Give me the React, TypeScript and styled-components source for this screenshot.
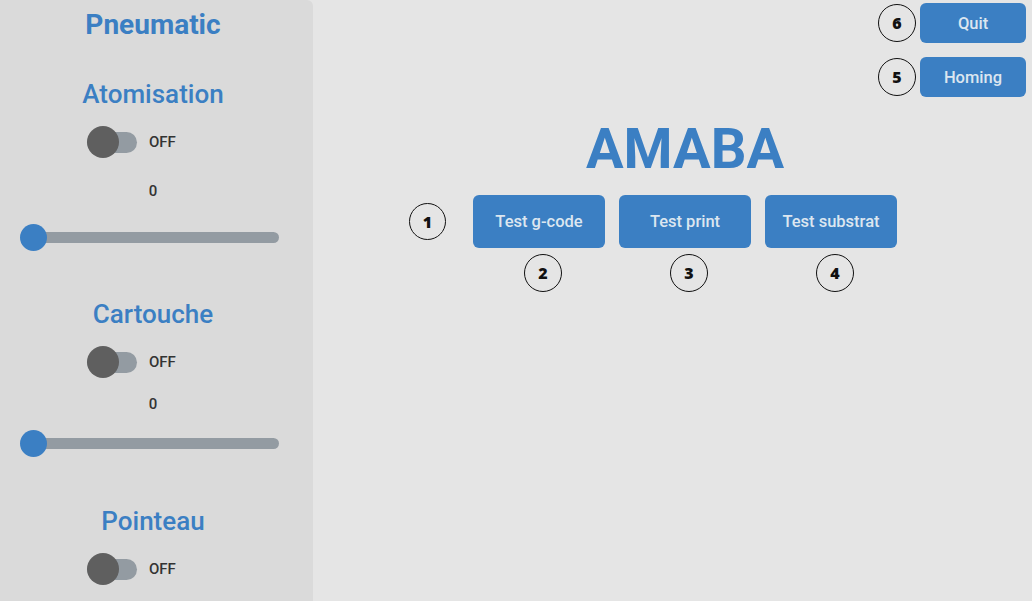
import React from 'react'
import styled, { createGlobalStyle } from 'styled-components'

const BLUE = '#3b7fc3'

const GlobalStyle = createGlobalStyle`
  html, body {
    margin: 0;
    padding: 0;
    background: #e5e5e5;
    font-family: Roboto, "Liberation Sans", Arial, sans-serif;
  }
  #root {
    width: 1032px;
    height: 601px;
    overflow: hidden;
  }
`

const Page = styled.div`
  display: flex;
  width: 100%;
  height: 100%;
`

const Sidebar = styled.aside`
  box-sizing: border-box;
  width: 313px;
  height: 100%;
  flex-shrink: 0;
  overflow: hidden;
  background: #dadada;
  border-top-right-radius: 6px;
  padding: 8px 27px 0 20px;
  display: flex;
  flex-direction: column;
  align-items: center;
`

const PanelTitle = styled.h1`
  margin: 0;
  font-size: 28px;
  line-height: 34px;
  font-weight: 700;
  color: ${BLUE};
`

const SectionTitle = styled.h2<{ $mt: number }>`
  margin: ${({ $mt }) => $mt}px 0 0;
  font-size: 26px;
  line-height: 32px;
  font-weight: 500;
  color: ${BLUE};
`

const SwitchRow = styled.label`
  align-self: flex-start;
  margin: 16px 0 0 67px;
  height: 32px;
  display: flex;
  align-items: center;
  gap: 12px;
  cursor: pointer;
`

const SwitchTrack = styled.span`
  position: relative;
  width: 50px;
  height: 21px;
  border-radius: 11px;
  background: #939ba2;
  display: flex;
  align-items: center;
`

const SwitchKnob = styled.span`
  position: absolute;
  left: 0;
  top: -6px;
  width: 32px;
  height: 32px;
  border-radius: 50%;
  background: #5f5f5f;
`

const SwitchText = styled.span`
  font-size: 15px;
  font-weight: 500;
  color: #333;
`

const Value = styled.div<{ $mt: number }>`
  margin-top: ${({ $mt }) => $mt}px;
  font-size: 15px;
  line-height: 20px;
  font-weight: 500;
  color: #333;
`

const Slider = styled.div<{ $mt: number }>`
  position: relative;
  align-self: flex-start;
  margin-top: ${({ $mt }) => $mt}px;
  width: 259px;
  height: 28px;
  display: flex;
  align-items: center;
`

const SliderTrack = styled.div`
  margin-left: 13px;
  flex: 1;
  height: 11px;
  border-radius: 6px;
  background: #939ba2;
`

const SliderThumb = styled.div`
  position: absolute;
  left: 0;
  top: 1px;
  width: 27px;
  height: 27px;
  border-radius: 50%;
  background: ${BLUE};
`

const Main = styled.main`
  flex: 1;
  display: flex;
  flex-direction: column;
  padding: 3px 6px 0 0;
`

const TopActions = styled.div`
  display: flex;
  flex-direction: column;
  align-items: flex-end;
  gap: 14px;
`

const ActionRow = styled.div`
  display: flex;
  align-items: center;
  gap: 4px;
`

const Button = styled.button<{ $w: number; $h: number }>`
  width: ${({ $w }) => $w}px;
  height: ${({ $h }) => $h}px;
  border: none;
  border-radius: 6px;
  background: ${BLUE};
  color: #dce6f0;
  font-family: Roboto, "Liberation Sans", Arial, sans-serif;
  font-size: 16.5px;
  font-weight: 500;
  cursor: pointer;
`

const Center = styled.div`
  display: flex;
  flex-direction: column;
  align-items: center;
  margin-left: 31px;
`

const Brand = styled.div`
  margin-top: 24px;
  font-size: 56px;
  line-height: 56px;
  font-weight: 700;
  color: ${BLUE};
`

const TestRow = styled.div`
  position: relative;
  margin-top: 18px;
  display: flex;
  gap: 14px;
`

const TestItem = styled.div`
  display: flex;
  flex-direction: column;
  align-items: center;
`

const Marker = styled.span<{ $size?: number }>`
  box-sizing: border-box;
  width: ${({ $size }) => $size ?? 38}px;
  height: ${({ $size }) => $size ?? 38}px;
  border: 1.5px solid #111;
  border-radius: 50%;
  display: inline-flex;
  align-items: center;
  justify-content: center;
  font-family: "Open Sans", "DejaVu Sans", sans-serif;
  font-size: 16px;
  font-weight: 800;
  color: #111;
`

const MarkerBelow = styled(Marker)`
  margin: 6px 0 0 8px;
`

const MarkerLeft = styled(Marker)`
  position: absolute;
  right: calc(100% + 27px);
  top: 8px;
`

const Toggle = () => (
  <SwitchRow>
    <SwitchTrack>
      <SwitchKnob />
    </SwitchTrack>
    <SwitchText>OFF</SwitchText>
  </SwitchRow>
)

const RangeSlider = ({ mt }: { mt: number }) => (
  <Slider $mt={mt}>
    <SliderTrack />
    <SliderThumb />
  </Slider>
)

const tests = [
  { label: 'Test g-code', n: 2 },
  { label: 'Test print', n: 3 },
  { label: 'Test substrat', n: 4 }
]

export default function App() {
  return (
    <>
      <GlobalStyle />
      <Page>
        <Sidebar>
          <PanelTitle>Pneumatic</PanelTitle>

          <SectionTitle $mt={36}>Atomisation</SectionTitle>
          <Toggle />
          <Value $mt={23}>0</Value>
          <RangeSlider mt={22} />

          <SectionTitle $mt={47}>Cartouche</SectionTitle>
          <Toggle />
          <Value $mt={16}>0</Value>
          <RangeSlider mt={15} />

          <SectionTitle $mt={48}>Pointeau</SectionTitle>
          <Toggle />
        </Sidebar>

        <Main>
          <TopActions>
            <ActionRow>
              <Marker>6</Marker>
              <Button $w={106} $h={40}>Quit</Button>
            </ActionRow>
            <ActionRow>
              <Marker>5</Marker>
              <Button $w={106} $h={40}>Homing</Button>
            </ActionRow>
          </TopActions>

          <Center>
            <Brand>AMABA</Brand>
            <TestRow>
              <MarkerLeft $size={37}>1</MarkerLeft>
              {tests.map(t => (
                <TestItem key={t.n}>
                  <Button $w={132} $h={53}>{t.label}</Button>
                  <MarkerBelow>{t.n}</MarkerBelow>
                </TestItem>
              ))}
            </TestRow>
          </Center>
        </Main>
      </Page>
    </>
  )
}
